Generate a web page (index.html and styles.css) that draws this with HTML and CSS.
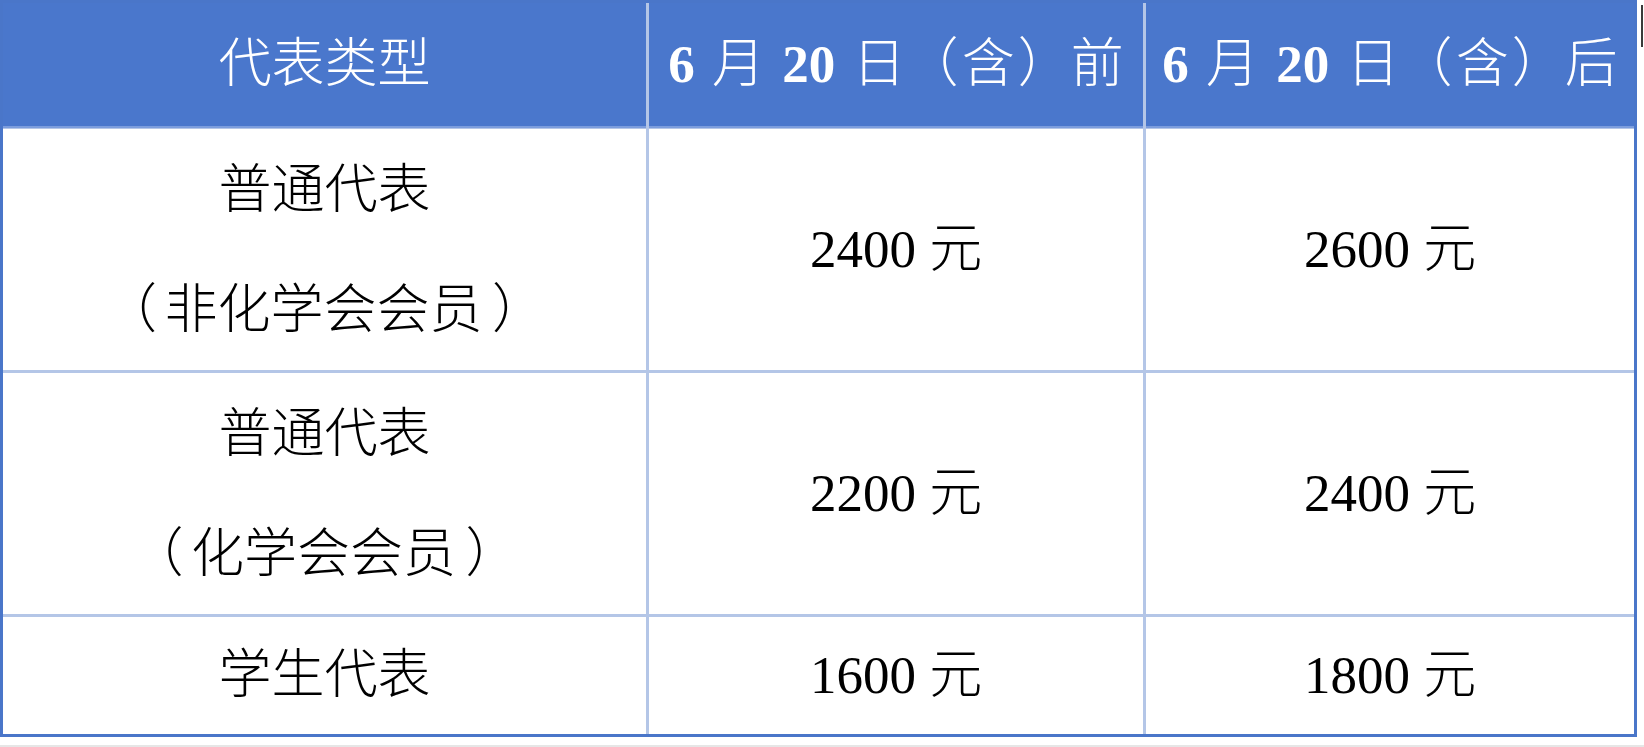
FILE: index.html
```html
<!DOCTYPE html>
<html lang="zh-CN">
<head>
<meta charset="utf-8">
<title>注册费</title>
<link rel="stylesheet" href="styles.css">
</head>
<body>
<div class="page">
  <div class="fee-table">
    <div class="cell head">代表类型</div>
    <div class="cell head"><span class="num">6</span> 月 <span class="num">20</span> 日<span class="lp">（</span>含<span class="rp">）</span>前</div>
    <div class="cell head"><span class="num">6</span> 月 <span class="num">20</span> 日<span class="lp">（</span>含<span class="rp">）</span>后</div>

    <div class="cell type"><span class="line">普通代表</span><span class="line"><span class="lp">（</span>非化学会会员<span class="rp">）</span></span></div>
    <div class="cell"><span class="price"><span class="num">2400</span> 元</span></div>
    <div class="cell"><span class="price"><span class="num">2600</span> 元</span></div>

    <div class="cell type"><span class="line">普通代表</span><span class="line"><span class="lp">（</span>化学会会员<span class="rp">）</span></span></div>
    <div class="cell"><span class="price"><span class="num">2200</span> 元</span></div>
    <div class="cell"><span class="price"><span class="num">2400</span> 元</span></div>

    <div class="cell type">学生代表</div>
    <div class="cell"><span class="price"><span class="num">1600</span> 元</span></div>
    <div class="cell"><span class="price"><span class="num">1800</span> 元</span></div>
  </div>
  <div class="scroll-mark"></div>
</div>
</body>
</html>
```

FILE: styles.css
```css
html, body {
  margin: 0;
  padding: 0;
  background: #ffffff;
}

.page {
  position: relative;
  width: 1644px;
  height: 747px;
  box-sizing: border-box;
  border-bottom: 2px solid #e6e6e6;
}

.fee-table {
  display: grid;
  grid-template-columns: 643px 494px 488px;
  grid-template-rows: 123px 241px 241px 117px;
  gap: 3px;
  width: 1637px;
  height: 737px;
  box-sizing: border-box;
  border: 3px solid #4a76c9;
  background: #b4c6e7;
  font-family: "Liberation Serif", "Noto Sans CJK SC", serif;
  font-size: 53px;
  font-weight: 300;
  color: #000000;
}

.cell {
  background: #ffffff;
  display: flex;
  flex-direction: column;
  align-items: center;
  justify-content: center;
  white-space: nowrap;
  line-height: 1.2;
}

.head {
  display: block;
  background: #4a77cc;
  color: #ffffff;
  text-align: center;
  line-height: 123px;
  word-spacing: 4px;
  box-shadow: 0 2px 0 #7c9ddd;
}

.price {
  display: block;
}

.num {
  font-family: "Liberation Serif", serif;
  font-weight: 400;
}

.head .num {
  font-weight: 700;
}

.type .line {
  display: block;
  line-height: 120px;
}

.lp {
  display: inline-block;
  margin-right: 0.14em;
}

.rp {
  display: inline-block;
  margin-left: 0.18em;
}

.head .lp {
  margin-right: 0.06em;
}

.head .rp {
  margin-left: 0.06em;
}

.scroll-mark {
  position: absolute;
  right: 1px;
  top: 5px;
  width: 2px;
  height: 42px;
  background: #3a3a3a;
}
```
